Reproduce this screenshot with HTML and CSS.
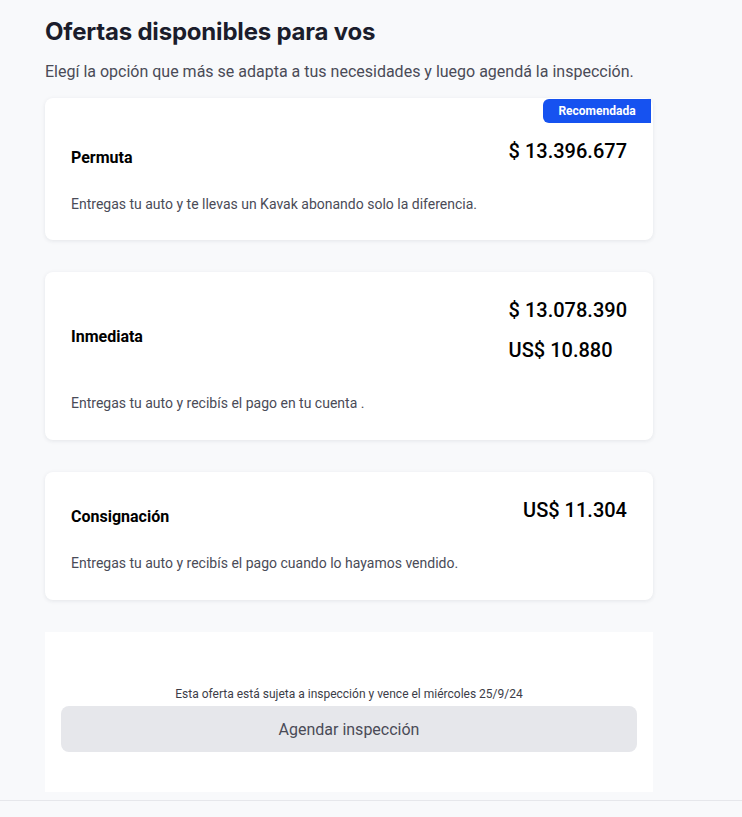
FILE: index.html
```html
<!DOCTYPE html>
<html lang="es">
<head>
<meta charset="utf-8">
<link rel="stylesheet" href="styles.css">
</head>
<body>
<main class="page">
  <h1 class="title">Ofertas disponibles para vos</h1>
  <p class="subtitle">Elegí la opción que más se adapta a tus necesidades y luego agendá la inspección.</p>

  <section class="card card--featured">
    <span class="badge">Recomendada</span>
    <div class="row">
      <h2 class="name">Permuta</h2>
      <div class="prices"><span class="price">$ 13.396.677</span></div>
    </div>
    <p class="desc">Entregas tu auto y te llevas un Kavak abonando solo la diferencia.</p>
  </section>

  <section class="card">
    <div class="row">
      <h2 class="name">Inmediata</h2>
      <div class="prices"><span class="price">$ 13.078.390</span><span class="price">US$ 10.880</span></div>
    </div>
    <p class="desc">Entregas tu auto y recibís el pago en tu cuenta .</p>
  </section>

  <section class="card">
    <div class="row">
      <h2 class="name">Consignación</h2>
      <div class="prices"><span class="price">US$ 11.304</span></div>
    </div>
    <p class="desc">Entregas tu auto y recibís el pago cuando lo hayamos vendido.</p>
  </section>

  <section class="panel">
    <p class="note">Esta oferta está sujeta a inspección y vence el miércoles 25/9/24</p>
    <button class="btn" type="button">Agendar inspección</button>
  </section>
</main>
<footer class="footer"></footer>
</body>
</html>
```

FILE: styles.css
```css
* { box-sizing: border-box; }
html, body { margin: 0; padding: 0; }
body {
  background: #f8f9fb;
  font-family: Roboto, "Liberation Sans", sans-serif;
  color: #000;
}
.page {
  width: 608px;
  margin-left: 45px;
  padding-top: 17px;
  display: flex;
  flex-direction: column;
}
.title {
  margin: 0;
  font-family: Inter, "Open Sans", sans-serif;
  font-weight: 700;
  font-size: 24px;
  line-height: 30px;
  letter-spacing: -0.2px;
  color: #1b1d2c;
}
.subtitle {
  margin: 15px 0 0;
  font-size: 16px;
  line-height: 20px;
  color: #4a4b57;
  white-space: nowrap;
}
.card {
  position: relative;
  background: #fff;
  border-radius: 8px;
  box-shadow: 0 1px 4px rgba(20, 30, 60, 0.09);
  padding: 21px 26px 27px;
  margin-top: 32px;
}
.card--featured {
  margin-top: 16px;
  padding-top: 36px;
  padding-bottom: 26px;
}
.badge {
  position: absolute;
  top: 1px;
  right: 2px;
  width: 108px;
  height: 24px;
  background: #1652f0;
  color: #fff;
  font-size: 12px;
  font-weight: 700;
  line-height: 24px;
  text-align: center;
  border-radius: 6px 0 0 6px;
}
.row {
  display: flex;
  justify-content: space-between;
  align-items: center;
}
.name {
  margin: 0;
  padding-top: 14px;
  font-size: 16px;
  line-height: 20px;
  font-weight: 700;
}
.prices {
  display: flex;
  flex-direction: column;
  gap: 16px;
  padding: 5px 0;
}
.price {
  font-size: 20px;
  line-height: 24px;
  font-weight: 500;
}
.desc {
  margin: 26px 0 0;
  font-size: 14px;
  line-height: 20px;
  color: #4a4b57;
}
.panel {
  margin-top: 32px;
  background: #fff;
  padding: 54px 16px 40px;
  display: flex;
  flex-direction: column;
  align-items: center;
}
.note {
  margin: 0 0 4px;
  font-size: 12px;
  line-height: 16px;
  color: #3c3d48;
}
.btn {
  width: 100%;
  height: 46px;
  border: 0;
  border-radius: 8px;
  background: #e6e7eb;
  font-family: Roboto, "Liberation Sans", sans-serif;
  font-size: 16px;
  color: #4a4b57;
}
.footer {
  margin-top: 8px;
  border-top: 1px solid #e6e7eb;
  height: 17px;
}
```
